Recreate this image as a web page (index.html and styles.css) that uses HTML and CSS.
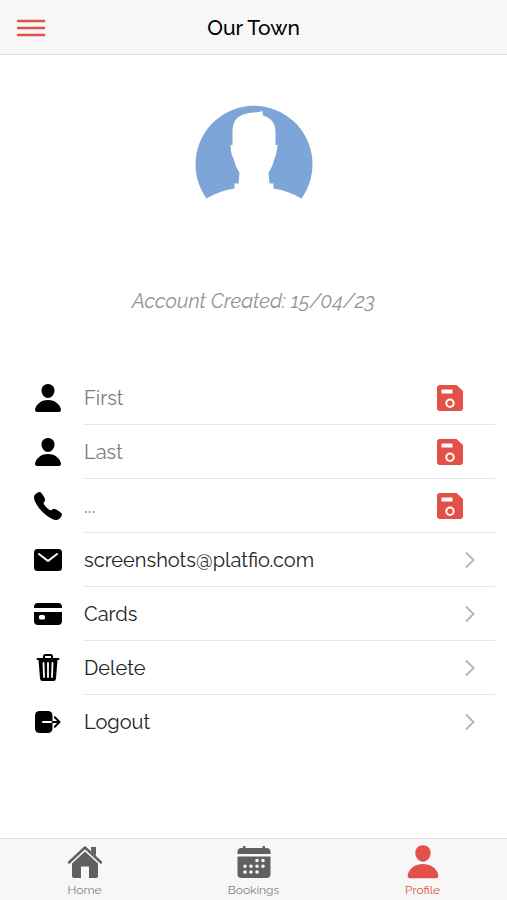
FILE: index.html
```html
<!DOCTYPE html>
<html lang="en">
<head>
<meta charset="utf-8">
<meta name="viewport" content="width=device-width, initial-scale=1">
<title>Our Town</title>
<link rel="stylesheet" href="styles.css">
</head>
<body>
<svg class="defs" aria-hidden="true">
  <symbol id="person" viewBox="0 0 512 512"><path d="M332.64 64.58C313.18 43.57 286 32 256 32c-30.16 0-57.43 11.5-76.8 32.38-19.58 21.11-29.12 49.8-26.88 80.78C156.76 206.28 203.27 256 256 256s99.16-49.71 103.67-110.82c2.27-30.7-7.33-59.33-27.03-80.6zM432 480H80a31 31 0 01-24.2-11.13c-6.5-7.77-9.12-18.38-7.18-29.11C57.06 392.94 83.4 353.61 124.8 326c36.78-24.51 83.37-38 131.2-38s94.42 13.5 131.2 38c41.4 27.6 67.74 66.93 76.18 113.75 1.94 10.73-.68 21.34-7.18 29.11A31 31 0 01432 480z"/></symbol>
  <symbol id="save" viewBox="0 0 26 26"><path fill-rule="evenodd" d="M3 0H19.500L26 6V23Q26 26 23 26H3Q0 26 0 23V3Q0 0 3 0ZM4.500 4.500V8.500H15.500V4.500ZM13 13.500A4.700 4.700 0 1 0 13 22.900A4.700 4.700 0 1 0 13 13.500ZM13 15.500A2.700 2.700 0 1 1 13 20.900A2.700 2.700 0 1 1 13 15.500Z"/></symbol>
  <symbol id="chevron" viewBox="0 0 10 18"><path d="M1 1.500L8.500 9L1 16.500" fill="none" stroke="currentColor" stroke-width="2"/></symbol>
</svg>
<div class="app">
  <header class="header">
    <button class="menu" type="button" aria-label="Menu">
      <svg viewBox="0 0 30 18"><path d="M2 2H28M2 9H28M2 16H28" fill="none" stroke="currentColor" stroke-width="2.500" stroke-linecap="round"/></svg>
    </button>
    <h1 class="title">Our Town</h1>
  </header>
  <main class="content">
    <svg class="avatar" viewBox="0 0 118 94" role="img" aria-label="Profile picture">
      <path fill="#7da5d8" d="M11.500 93.500A58.500 58.500 0 1 1 106.500 93.500Q94 86 78.500 83.500V78.500H74.500L73.500 68Q78 61 79.500 53.500Q81.500 50 82.500 40H80.500V27C80.500 18 76 13 68 10.500L67.500 6C62 8 56 7 50 9C41 11.500 37.500 17 37.500 28V40H35.500Q36 50 38.500 53.500Q40 61 44.500 68L43.500 78.500H39.500V83.500Q24 86 11.500 93.500Z"/>
    </svg>
    <p class="created">Account Created: 15/04/23</p>
    <ul class="list">
      <li class="row">
        <svg class="icon"><use href="#person"/></svg>
        <div class="cell"><input class="field" type="text" placeholder="First" aria-label="First name"><button class="save" type="button" aria-label="Save first name"><svg><use href="#save"/></svg></button></div>
      </li>
      <li class="row">
        <svg class="icon"><use href="#person"/></svg>
        <div class="cell"><input class="field" type="text" placeholder="Last" aria-label="Last name"><button class="save" type="button" aria-label="Save last name"><svg><use href="#save"/></svg></button></div>
      </li>
      <li class="row">
        <svg class="icon" viewBox="0 0 512 512"><path d="M391 480c-19.520 0-46.940-7.060-88-30-49.930-28-88.550-53.850-138.210-103.380C116.910 298.770 93.610 267.790 61 208.450c-36.840-67-30.560-102.120-23.540-117.130C45.820 73.380 58.160 62.650 74.110 52a176.300 176.300 0 0128.640-15.200c1-.43 1.930-.84 2.760-1.210 4.950-2.230 12.450-5.600 21.950-2 6.340 2.380 12 7.250 20.860 16 18.170 17.920 43 57.830 52.160 77.430 6.150 13.210 10.220 21.930 10.230 31.710 0 11.450-5.760 20.280-12.750 29.810-1.310 1.790-2.610 3.500-3.870 5.160-7.610 10-9.280 12.890-8.180 18.050 2.230 10.370 18.860 41.240 46.190 68.510s57.310 42.850 67.720 45.070c5.380 1.150 8.330-.59 18.650-8.470 1.480-1.130 3-2.300 4.590-3.470 10.660-7.930 19.080-13.540 30.260-13.540h.06c9.730 0 18.060 4.220 31.860 11.180 18 9.080 59.110 33.590 77.140 51.780 8.770 8.840 13.660 14.480 16.050 20.810 3.600 9.530.21 17-2 22-.37.83-.78 1.740-1.210 2.750a176.490 176.490 0 01-15.290 28.580c-10.630 15.900-21.400 28.210-39.380 36.580A67.420 67.420 0 01391 480z"/></svg>
        <div class="cell"><input class="field" type="tel" placeholder="..." aria-label="Phone number"><button class="save" type="button" aria-label="Save phone number"><svg><use href="#save"/></svg></button></div>
      </li>
      <li class="row">
        <svg class="icon" viewBox="0 0 32 32"><rect x="2" y="5" width="28" height="22" rx="3.500"/><path d="M7 10L16 17L25 10" fill="none" stroke="#fff" stroke-width="2" stroke-linecap="round" stroke-linejoin="round"/></svg>
        <a class="cell" href="#email"><span class="label">screenshots@platfio.com</span><svg class="chevron"><use href="#chevron"/></svg></a>
      </li>
      <li class="row">
        <svg class="icon" viewBox="0 0 32 32"><path fill-rule="evenodd" d="M2 10V9Q2 5 6 5H26Q30 5 30 9V10ZM2 14H30V23Q30 27 26 27H6Q2 27 2 23ZM8.500 17Q7 17 7 18.500V20Q7 21.500 8.500 21.500H11.500Q13 21.500 13 20V18.500Q13 17 11.500 17Z"/></svg>
        <a class="cell" href="#cards"><span class="label">Cards</span><svg class="chevron"><use href="#chevron"/></svg></a>
      </li>
      <li class="row">
        <svg class="icon" viewBox="0 0 32 32"><path d="M12 6V4.500Q12 3 13.500 3H18.500Q20 3 20 4.500V6" fill="none" stroke="#000" stroke-width="2"/><path d="M5.500 6H26.500Q27.500 6 27.500 7T26.500 8H25.500L24 26.500Q23.800 29 21.500 29H10.500Q8.200 29 8 26.500L6.500 8H5.500Q4.500 8 4.500 7T5.500 6Z"/><path d="M11.500 11L12 25M16 11V25M20.500 11L20 25" fill="none" stroke="#fff" stroke-width="1.800" stroke-linecap="round"/></svg>
        <a class="cell" href="#delete"><span class="label">Delete</span><svg class="chevron"><use href="#chevron"/></svg></a>
      </li>
      <li class="row">
        <svg class="icon" viewBox="0 0 32 32"><rect x="3" y="5" width="17.500" height="22" rx="4.500"/><path d="M11 16H20.500" fill="none" stroke="#fff" stroke-width="2" stroke-linecap="round"/><path d="M20.500 16H27M22.800 11.200L27.500 16L22.800 20.800" fill="none" stroke="#000" stroke-width="2" stroke-linecap="round" stroke-linejoin="round"/></svg>
        <a class="cell" href="#logout"><span class="label">Logout</span><svg class="chevron"><use href="#chevron"/></svg></a>
      </li>
    </ul>
  </main>
  <nav class="tabs">
    <a class="tab" href="#home">
      <svg viewBox="0 0 36 36"><path d="M18 7.500L31 19.500V32Q31 34 29 34H22V22.500H14V34H7Q5 34 5 32V19.500Z"/><path d="M2 18.500L18 3.500L34 18.500" fill="none" stroke="currentColor" stroke-width="2.400" stroke-linecap="round" stroke-linejoin="round"/><path d="M24 3H29V12L24 7.500Z"/></svg>
      <span>Home</span>
    </a>
    <a class="tab" href="#bookings">
      <svg viewBox="0 0 36 36"><path d="M1.500 10V8Q1.500 4 5.500 4H7V2H9.500V4H26.500V2H29V4H30.500Q34.500 4 34.500 8V10ZM1.500 12.500H34.500V30Q34.500 34 30.500 34H5.500Q1.500 34 1.500 30Z"/><path d="M21 16.500h.01M27 16.500h.01M9 22.200h.01M15 22.200h.01M21 22.200h.01M27 22.200h.01M9 28h.01M15 28h.01M21 28h.01" fill="none" stroke="#f7f7f7" stroke-width="3.600" stroke-linecap="round"/></svg>
      <span>Bookings</span>
    </a>
    <a class="tab active" href="#profile" aria-current="page">
      <svg viewBox="12 16 488 488"><use href="#person" width="512" height="512"/></svg>
      <span>Profile</span>
    </a>
  </nav>
</div>
</body>
</html>
```
FILE: styles.css
```css
* { box-sizing: border-box; }

body {
  margin: 0;
  background: #fff;
  color: #222;
  font-family: Raleway, Lato, sans-serif;
  font-size: 20px;
  line-height: 24px;
}

svg { display: block; fill: currentColor; }
button { padding: 0; border: 0; background: none; color: #e25148; cursor: pointer; }
a { color: inherit; text-decoration: none; }

.defs { position: absolute; width: 0; height: 0; }

.app { display: flex; flex-direction: column; min-height: 100vh; }

.header {
  display: grid;
  grid-template-columns: 32px 1fr 32px;
  align-items: center;
  height: 55px;
  padding: 2px 16px 0;
  background: #f7f7f7;
  border-bottom: 1px solid #dcdcdc;
}
.menu svg { width: 30px; height: 18px; }
.title { margin: 0; color: #000; font-size: 21px; font-weight: 500; text-align: center; }

.content { flex: 1; display: flex; flex-direction: column; align-items: center; }
.avatar { width: 118px; height: 94px; margin-top: 50px; }
.created { margin: 90px 0 0; color: #929292; font-style: italic; }

.list { align-self: stretch; margin: 58px 12px 0 32px; padding: 0; list-style: none; }
.row { display: flex; align-items: center; gap: 20px; }
.icon { flex: none; width: 32px; height: 32px; color: #000; }
.cell {
  flex: 1;
  display: flex;
  align-items: center;
  min-width: 0;
  height: 54px;
  border-bottom: 1px solid #e6e6e6;
}
.row:last-child .cell { border-bottom-color: transparent; }
.field {
  flex: 1;
  min-width: 0;
  padding: 0;
  border: 0;
  background: none;
  color: inherit;
  font: inherit;
}
.field::placeholder { color: #7c7c7c; opacity: 1; }
.save { margin-right: 32px; }
.save svg { width: 26px; height: 26px; }
.label { flex: 1; }
.chevron { width: 10px; height: 18px; margin-right: 20px; color: #b8b8b8; }

.tabs {
  display: grid;
  grid-template-columns: repeat(3, 1fr);
  height: 62px;
  background: #f7f7f7;
  border-top: 1px solid #dcdcdc;
}
.tab {
  display: flex;
  flex-direction: column;
  align-items: center;
  padding-top: 5px;
  color: #606060;
  font-size: 12px;
  line-height: 16px;
}
.tab svg { width: 36px; height: 36px; }
.tab span { margin-top: 2px; color: #808080; }
.tab.active, .tab.active span { color: #e25148; }
```
